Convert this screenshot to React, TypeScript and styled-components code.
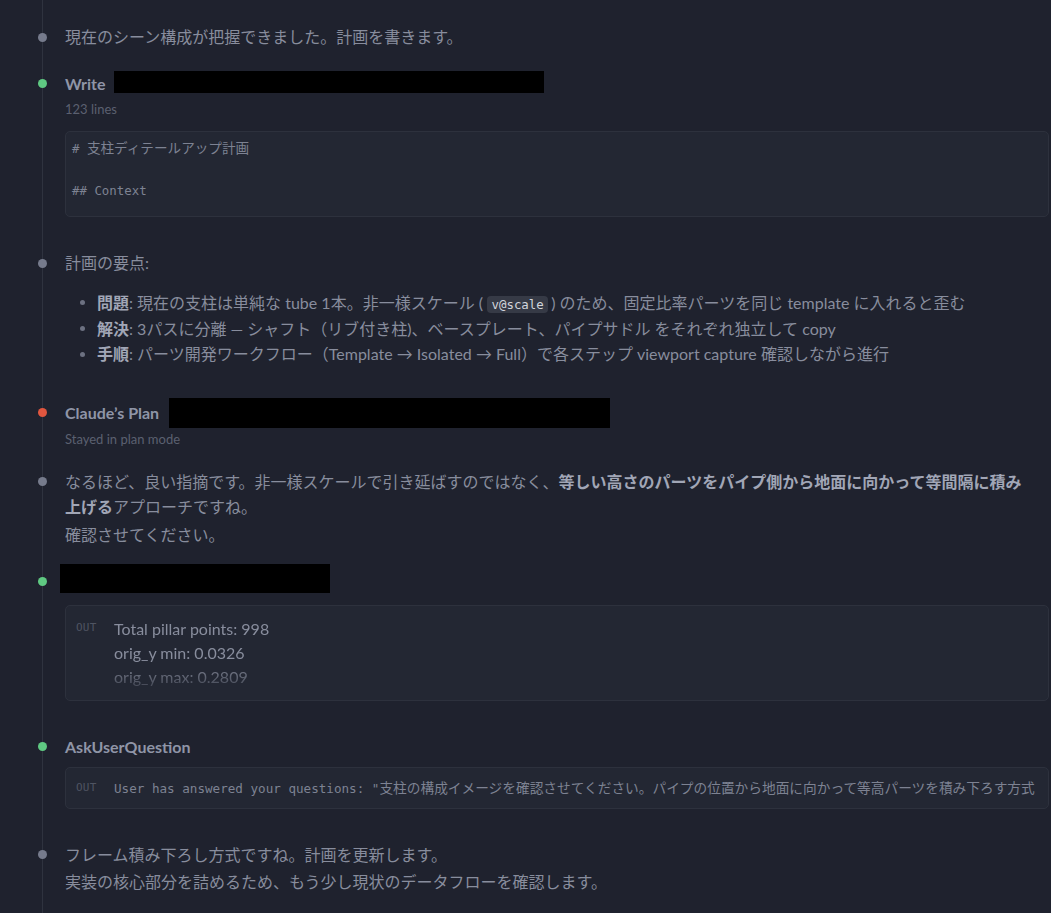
import React from "react";
import styled, { createGlobalStyle } from "styled-components";

const GlobalStyle = createGlobalStyle`
  html, body {
    margin: 0;
    padding: 0;
    background: #1f222e;
  }
  body {
    font-family: Lato, "DejaVu Sans", "Noto Sans CJK JP", sans-serif;
    color: #888d9d;
    overflow: hidden;
  }
`;

const Timeline = styled.main`
  box-sizing: border-box;
  min-height: 100vh;
  margin: 0 2px 0 42px;
  padding: 24px 0 0 22px;
  border-left: 1px solid #2f333f;
  display: flex;
  flex-direction: column;
  gap: 21px;
`;

const Entry = styled.section`
  position: relative;
  display: flex;
  flex-direction: column;
`;

type Tone = "gray" | "green" | "red";
const toneColor: Record<Tone, string> = {
  gray: "#767b8c",
  green: "#5fc982",
  red: "#e0563f",
};

const Dot = styled.span<{ $tone: Tone }>`
  position: absolute;
  left: -27.5px;
  top: 8.5px;
  width: 9px;
  height: 9px;
  border-radius: 50%;
  background: ${(p) => toneColor[p.$tone]};
`;

const Para = styled.p`
  margin: 0;
  padding-right: 16px;
  font-size: 16px;
  line-height: 25.6px;
  & + & {
    margin-top: 2px;
  }
`;

const Strong = styled.strong`
  font-weight: 700;
  color: #a1a6b6;
`;

const TitleRow = styled.div`
  display: flex;
  align-items: center;
  height: 25.6px;
`;

const TitleText = styled.span`
  font-size: 16px;
  font-weight: 700;
  color: #8f95a7;
`;

const Redacted = styled.span<{ $w: number; $h: number; $ml: number; $lift?: number }>`
  display: block;
  flex: none;
  background: #000;
  width: ${(p) => p.$w}px;
  height: ${(p) => p.$h}px;
  margin-left: ${(p) => p.$ml}px;
  margin-bottom: ${(p) => (p.$lift ?? 0) * 2}px;
`;

const Meta = styled.div`
  margin-top: 4px;
  font-size: 13px;
  line-height: 18px;
  color: #5b6070;
`;

const Panel = styled.div<{ $mt: number }>`
  box-sizing: border-box;
  margin: ${(p) => p.$mt}px 0 12px;
  border: 1px solid #2d313d;
  background: #232733;
  border-radius: 5px;
  overflow: hidden;
`;

const CodePanel = styled(Panel)`
  height: 86px;
  padding: 5px 6px;
  font-family: "DejaVu Sans Mono", "Noto Sans CJK JP", monospace;
  font-size: 12.4px;
  line-height: 21px;
  white-space: pre;
  color: #7d8292;
`;

const Jp = styled.span<{ $size: number }>`
  font-family: "Noto Sans CJK JP", sans-serif;
  font-size: ${(p) => p.$size}px;
`;

const OutPanel = styled(Panel)<{ $pad: number }>`
  display: flex;
  align-items: flex-start;
  padding: ${(p) => p.$pad}px 10px;
`;

const OutLabel = styled.span`
  flex: none;
  width: 38px;
  font-family: "DejaVu Sans Mono", monospace;
  font-size: 11px;
  line-height: 22px;
  letter-spacing: 0.2px;
  color: #4f5462;
`;

const OutText = styled.div`
  flex: 1;
  min-width: 0;
  height: 72px;
  overflow: hidden;
  font-size: 16px;
  line-height: 24px;
  color: #888d9d;
  -webkit-mask-image: linear-gradient(to bottom, #000 62%, rgba(0, 0, 0, 0.28) 100%);
  mask-image: linear-gradient(to bottom, #000 62%, rgba(0, 0, 0, 0.28) 100%);
`;

const OutMono = styled.div`
  flex: 1;
  min-width: 0;
  overflow: hidden;
  white-space: nowrap;
  font-family: "DejaVu Sans Mono", "Noto Sans CJK JP", monospace;
  font-size: 12.6px;
  line-height: 21px;
  color: #7d8292;
`;

const BulletList = styled.ul`
  margin: 14.4px 0 12px;
  padding: 0 0 0 14.5px;
  list-style: none;
`;

const BulletItem = styled.li`
  display: flex;
  align-items: flex-start;
  font-size: 16px;
  line-height: 25.6px;
`;

const BulletMark = styled.span`
  flex: none;
  width: 5px;
  height: 5px;
  margin: 10.3px 12.5px 0 0;
  border-radius: 50%;
  background: #6c7181;
`;

const InlineCode = styled.code`
  font-family: "DejaVu Sans Mono", monospace;
  font-size: 12.4px;
  line-height: 15px;
  padding: 1px 4.5px;
  margin: 0 3px 0 4px;
  border-radius: 4px;
  background: #363a46;
  color: #d2d5dc;
`;

export default function App() {
  return (
    <>
      <GlobalStyle />
      <Timeline>
        <Entry>
          <Dot $tone="gray" />
          <Para>現在のシーン構成が把握できました。計画を書きます。</Para>
        </Entry>

        <Entry>
          <Dot $tone="green" />
          <TitleRow>
            <TitleText>Write</TitleText>
            <Redacted $w={430} $h={22} $ml={8} $lift={1} />
          </TitleRow>
          <Meta>123 lines</Meta>
          <CodePanel $mt={13}>
            {"# "}
            <Jp $size={13.6}>支柱ディテールアップ計画</Jp>
            {"\n\n## Context\n"}
          </CodePanel>
        </Entry>

        <Entry>
          <Dot $tone="gray" />
          <Para>計画の要点:</Para>
          <BulletList>
            <BulletItem>
              <BulletMark />
              <span>
                <Strong>問題</Strong>: 現在の支柱は単純な tube 1本。非一様スケール (
                <InlineCode>v@scale</InlineCode>) のため、固定比率パーツを同じ template に入れると歪む
              </span>
            </BulletItem>
            <BulletItem>
              <BulletMark />
              <span>
                <Strong>解決</Strong>: 3パスに分離 — シャフト（リブ付き柱)、ベースプレート、パイプサドル をそれぞれ独立して copy
              </span>
            </BulletItem>
            <BulletItem>
              <BulletMark />
              <span>
                <Strong>手順</Strong>: パーツ開発ワークフロー（Template → Isolated → Full）で各ステップ viewport capture 確認しながら進行
              </span>
            </BulletItem>
          </BulletList>
        </Entry>

        <Entry>
          <Dot $tone="red" />
          <TitleRow>
            <TitleText>Claude’s Plan</TitleText>
            <Redacted $w={441} $h={30} $ml={10} />
          </TitleRow>
          <Meta>Stayed in plan mode</Meta>
        </Entry>

        <Entry>
          <Dot $tone="gray" />
          <Para>
            なるほど、良い指摘です。非一様スケールで引き延ばすのではなく、
            <Strong>等しい高さのパーツをパイプ側から地面に向かって等間隔に積み上げる</Strong>
            アプローチですね。
          </Para>
          <Para>確認させてください。</Para>
        </Entry>

        <Entry>
          <Dot $tone="green" />
          <TitleRow>
            <Redacted $w={270} $h={29} $ml={-5} $lift={3} />
          </TitleRow>
          <OutPanel $mt={11} $pad={11}>
            <OutLabel>OUT</OutLabel>
            <OutText>
              <div>Total pillar points: 998</div>
              <div>orig_y min: 0.0326</div>
              <div>orig_y max: 0.2809</div>
            </OutText>
          </OutPanel>
        </Entry>

        <Entry>
          <Dot $tone="green" />
          <TitleRow>
            <TitleText>AskUserQuestion</TitleText>
          </TitleRow>
          <OutPanel $mt={7} $pad={9}>
            <OutLabel>OUT</OutLabel>
            <OutMono>
              {'User has answered your questions: "'}
              <Jp $size={13.7}>
                支柱の構成イメージを確認させてください。パイプの位置から地面に向かって等高パーツを積み下ろす方式
              </Jp>
            </OutMono>
          </OutPanel>
        </Entry>

        <Entry>
          <Dot $tone="gray" />
          <Para>フレーム積み下ろし方式ですね。計画を更新します。</Para>
          <Para>実装の核心部分を詰めるため、もう少し現状のデータフローを確認します。</Para>
        </Entry>
      </Timeline>
    </>
  );
}
